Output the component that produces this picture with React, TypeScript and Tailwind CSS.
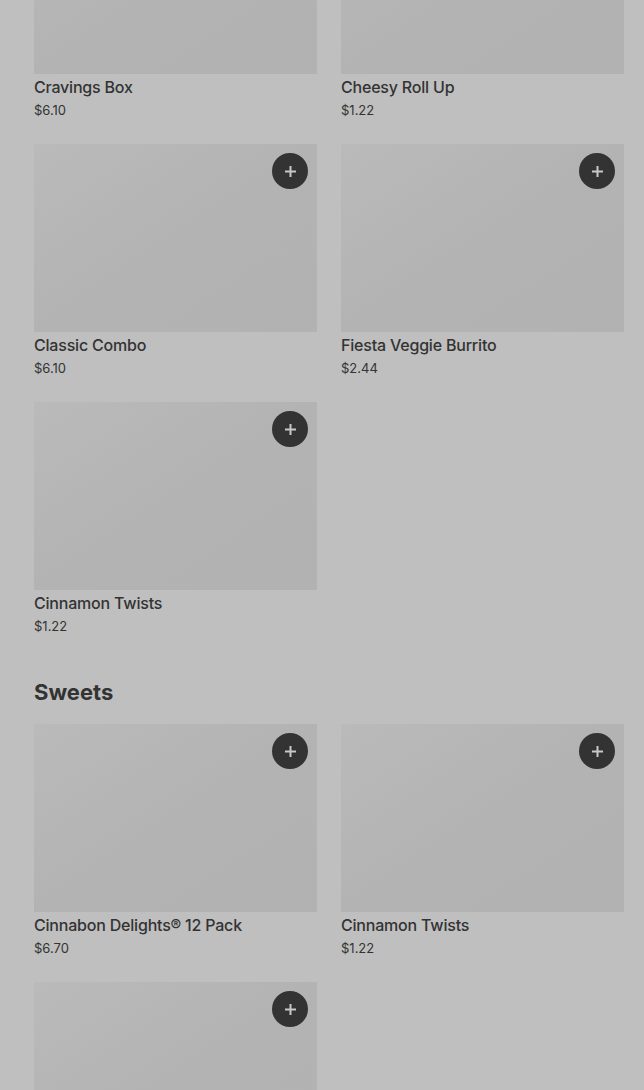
const combos = [
  { name: 'Cravings Box', price: '$6.10' },
  { name: 'Cheesy Roll Up', price: '$1.22' },
  { name: 'Classic Combo', price: '$6.10' },
  { name: 'Fiesta Veggie Burrito', price: '$2.44' },
  { name: 'Cinnamon Twists', price: '$1.22' },
];

const sweets = [
  { name: 'Cinnabon Delights® 12 Pack', price: '$6.70' },
  { name: 'Cinnamon Twists', price: '$1.22' },
  { name: '', price: '' },
];

function PlusButton() {
  return (
    <button className="absolute top-[9px] right-[9px] w-9 h-9 rounded-full bg-[#333333] flex items-center justify-center">
      <svg width="13" height="13" viewBox="0 0 13 13" fill="none">
        <path d="M6.5 1v11M1 6.5h11" stroke="#c8c8c8" strokeWidth="2" />
      </svg>
    </button>
  );
}

function ItemCard({ name, price, showButton = true }: { name: string; price: string; showButton?: boolean }) {
  return (
    <div className="flex flex-col">
      <div className="relative h-[188px] bg-gradient-to-br from-[#bababa] via-[#b3b3b3] to-[#b2b2b2]">
        {showButton && <PlusButton />}
      </div>
      {name && (
        <>
          <span className="mt-[3px] text-[16px] leading-5 font-medium tracking-[-0.2px] text-[#333333]">{name}</span>
          <span className="mt-[4px] text-[13px] leading-[18px] text-[#333333]">{price}</span>
        </>
      )}
    </div>
  );
}

export default function App() {
  return (
    <div className="h-[1090px] bg-[#bfbfbf] overflow-hidden" style={{ fontFamily: 'Inter, "Noto Sans", sans-serif' }}>
      <div className="pl-[34px] pr-5 -mt-[114px]">
        <div className="grid grid-cols-2 gap-x-6 gap-y-[25px]">
          {combos.map((item, i) => (
            <ItemCard key={i} name={item.name} price={item.price} showButton={i > 1} />
          ))}
        </div>

        <h2 className="mt-[43px] text-[22px] leading-7 font-bold text-[#333333]">Sweets</h2>

        <div className="mt-[18px] grid grid-cols-2 gap-x-6 gap-y-[25px]">
          {sweets.map((item, i) => (
            <ItemCard key={i} name={item.name} price={item.price} />
          ))}
        </div>
      </div>
    </div>
  );
}
